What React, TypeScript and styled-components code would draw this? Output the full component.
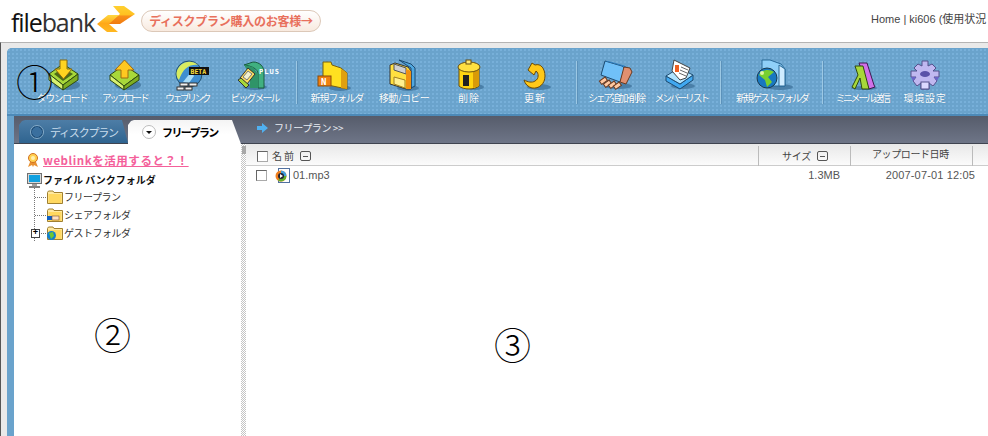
import React from "react";
import styled, { createGlobalStyle } from "styled-components";

const JP = `"Noto Sans CJK JP", "Liberation Sans", sans-serif`;

const Global = createGlobalStyle`
  html, body { margin: 0; padding: 0; background: #fff; }
  body { width: 988px; height: 436px; overflow: hidden; font-family: ${JP}; }
`;

/* ---------- toolbar icons ---------- */
const Shadow = ({ cx = 24, cy = 28, rx = 14, ry = 4 }: { cx?: number; cy?: number; rx?: number; ry?: number }) => (
  <ellipse cx={cx} cy={cy} rx={rx} ry={ry} fill="#4a7fa8" />
);

const DownloadIcon = () => (
  <Glyph viewBox="0 0 44 32">
    <Shadow cx={27} cy={25} rx={13} ry={5} />
    <polygon points="9,14 23,4 38,14 23,25" fill="#a8d83a" stroke="#2f4a10" />
    <polygon points="9,14 23,25 23,30 9,20" fill="#d8f070" stroke="#2f4a10" />
    <polygon points="38,14 23,25 23,30 38,20" fill="#7fae22" stroke="#2f4a10" />
    <polygon points="14,14 23,8 33,14 23,21" fill="#4c6a18" />
    <polygon points="20,0 27,0 27,9 32,9 23.5,19 15,9 20,9" fill="#ffd420" stroke="#8a6a10" />
  </Glyph>
);

const UploadIcon = () => (
  <Glyph viewBox="0 0 44 32">
    <Shadow cx={25} cy={25} rx={13} ry={5} />
    <polygon points="7,15 21,5 36,15 21,26" fill="#a8d83a" stroke="#2f4a10" />
    <polygon points="7,15 21,26 21,30 7,20" fill="#d8f070" stroke="#2f4a10" />
    <polygon points="36,15 21,26 21,30 36,20" fill="#7fae22" stroke="#2f4a10" />
    <polygon points="21.5,0 31,10 25,10 25,18 18,18 18,10 12,10" fill="#ffc820" stroke="#a06a10" />
  </Glyph>
);

const WeblinkIcon = () => (
  <Glyph viewBox="0 0 44 32">
    <circle cx={24} cy={14} r={13} fill="#3f8ed0" stroke="#24506c" />
    <path d="M11.5 13 C13 3 25 -2 33 5 C25 4 18 8 14 20 C12 18 11.5 16 11.5 13 Z" fill="#d8ec60" />
    <path d="M18 22 L26 12 L29 16 L24 23 Z" fill="#a8dcf8" />
    <g fill="#f0f0f0" stroke="#333" strokeWidth="1">
      <rect x={15} y={23} width={8} height={3} />
      <rect x={24} y={23} width={8} height={3} />
      <rect x={12} y={27} width={7} height={3} />
      <rect x={20} y={27} width={7} height={3} />
    </g>
    <rect x={24} y={7} width={20} height={8} fill="#111" />
    <IconText x={25.5} y={14} fill="#ffe040" size={6.5}>BETA</IconText>
  </Glyph>
);

const BigmailIcon = () => (
  <Glyph viewBox="0 0 44 32">
    <Shadow cx={22} cy={27} rx={12} ry={3} />
    <path d="M11 5 L20 2 C27 2 31 7 31 12 L31 28 L25 28 L25 14 C25 9 19 6 11 5 Z" fill="#40b080" stroke="#1a5a40" />
    <polygon points="11,5 20,7 25,14 25,28 17,28 17,15" fill="#2f9468" />
    <polygon points="7,18 15,8 22,14 14,24" fill="#ffe060" stroke="#333" />
    <polygon points="10,17 15,11 19,14 14,20" fill="#f0f0d0" stroke="#777" />
    <polygon points="5,20 8,18 16,25 13,28" fill="#a8d83a" stroke="#333" />
    <IconText x={26} y={14} fill="#fff" size={7} letterSpacing={1}>PLUS</IconText>
  </Glyph>
);

const NewFolderIcon = () => (
  <Glyph viewBox="0 0 44 32">
    <Shadow cx={25} cy={28} rx={11} ry={3} />
    <polygon points="8,2 16,2 17,5 26,8 32,13 32,29 8,24" fill="#ffe020" stroke="#7a6010" />
    <polygon points="26,9 32,13 32,29 26,28" fill="#e0a010" />
    <rect x={3} y={16} width={13} height={10} fill="#f08010" stroke="#8a4a08" />
    <IconText x={6} y={24.5} fill="#fff" size={9}>N</IconText>
  </Glyph>
);

const MoveIcon = () => (
  <Glyph viewBox="0 0 44 32">
    <Shadow cx={26} cy={28} rx={11} ry={3} />
    <polygon points="17,0 29,4 33,8 33,26 29,28 29,8" fill="#50a8e0" stroke="#1c4a70" />
    <polygon points="8,5 13,3 26,7 29,11 29,29 24,29 8,24" fill="#ffe040" stroke="#333" />
    <polygon points="12,4 24,8 24,14 12,10" fill="#d0d0d0" stroke="#555" />
    <polygon points="12,17 23,20 23,28 12,24" fill="#fff090" stroke="#a08020" />
    <polygon points="24,9 29,11 29,29 24,29" fill="#f09010" />
  </Glyph>
);

const DeleteIcon = () => (
  <Glyph viewBox="0 0 44 32">
    <Shadow cx={28} cy={27} rx={9} ry={3} />
    <path d="M12 8 L32 8 L32 26 C28 30 16 30 12 26 Z" fill="#ffd410" stroke="#6a5010" />
    <path d="M26 9 L32 8 L32 26 L26 28 Z" fill="#d89a08" />
    <ellipse cx={22} cy={7} rx={11} ry={5} fill="#ffe040" stroke="#6a5010" />
    <rect x={19} y={0} width={5} height={4} fill="#ffe870" stroke="#6a5010" />
    <rect x={16} y={15} width={6} height={11} fill="#222" />
  </Glyph>
);

const RefreshIcon = () => (
  <Glyph viewBox="0 0 44 32">
    <Shadow cx={26} cy={27} rx={12} ry={3} />
    <path d="M15 10 L19 3 L22 5 C28 3 32 9 32 16 C32 24 26 29 19 28 C15 27 12 24 11 20 C15 22 19 23 22 21 C26 19 26 13 23 11 L21 15 Z" fill="#ffc818" stroke="#6a4a08" />
  </Glyph>
);

const ShareIcon = () => (
  <Glyph viewBox="0 0 44 32">
    <Shadow cx={24} cy={26} rx={14} ry={3} />
    <polygon points="11,1 28,6 31,9 26,22 7,15" fill="#70c0f8" stroke="#1c4a70" />
    <polygon points="11,1 14,1 32,6 31,9 28,6" fill="#2f7fc0" />
    <polygon points="30,7 36,8 38,12 32,24 26,22" fill="#e09070" stroke="#6a3a20" />
    <g stroke="#6a3a20" fill="#ffc8a0">
      <rect x={6} y={19} width={7} height={4} transform="rotate(-35 9 21)" />
      <rect x={10} y={22} width={7} height={4} transform="rotate(-35 13 24)" />
      <rect x={15} y={23} width={7} height={4} transform="rotate(-35 18 25)" />
      <rect x={20} y={24} width={7} height={4} transform="rotate(-35 23 26)" />
    </g>
  </Glyph>
);

const MemberIcon = () => (
  <Glyph viewBox="0 0 44 32">
    <Shadow cx={24} cy={26} rx={12} ry={3} />
    <polygon points="7,16 21,24 34,15 34,20 21,29 7,21" fill="#40a8f0" stroke="#1c4a70" />
    <polygon points="7,16 20,8 34,15 21,24" fill="#b0e4ff" stroke="#1c4a70" />
    <polygon points="13,11 15,0 31,8 27,18 21,20" fill="#fff" stroke="#444" />
    <rect x={16} y={5} width={4} height={7} fill="#f06020" />
    <path d="M22 7 L29 10 M21 10 L28 13 M20 13 L27 16" stroke="#666" />
  </Glyph>
);

const GuestIcon = () => (
  <Glyph viewBox="0 0 44 32">
    <Shadow cx={30} cy={27} rx={13} ry={3} />
    <polygon points="12,0 20,0 31,4 35,9 35,26 22,26 12,16" fill="#90d0f8" stroke="#2a6a98" />
    <polygon points="29,5 35,9 35,26 29,26" fill="#d0ecff" stroke="#2a6a98" />
    <circle cx={17} cy={18} r={10} fill="#1878c0" stroke="#1a3a50" />
    <path d="M9 15 C12 9 20 9 24 12 L18 17 L22 22 L17 27 L15 20 Z" fill="#78d030" />
    <circle cx={12} cy={13} r={2} fill="#e0f8a0" />
  </Glyph>
);

const MiniMailIcon = () => (
  <Glyph viewBox="0 0 44 32">
    <Shadow cx={24} cy={28} rx={13} ry={2} />
    <polygon points="19,3 27,3 34,25 35,27 29,29 24,17" fill="#d070e8" stroke="#3c1a50" />
    <polygon points="15,6 23,6 29,29 22,29 20,18 15,29 12,27 18,15" fill="#a8d83a" stroke="#2f4a10" />
  </Glyph>
);

const SettingsIcon = () => (
  <Glyph viewBox="0 0 44 32">
    <polygon
      points="19,1 25,1 25,6 29,4 33,8 30,11 36,11 36,17 31,17 34,21 30,26 26,23 26,29 18,29 18,23 14,26 10,21 13,17 8,17 8,11 14,11 11,8 15,4 19,6"
      fill="#c0b8f0"
      stroke="#55508c"
    />
    <polygon points="8,17 13,17 10,21" fill="#6c64c8" />
    <polygon points="31,17 36,17 34,21" fill="#6c64c8" />
    <rect x={18} y={22} width={8} height={7} fill="#dcd8ff" stroke="#55508c" />
    <ellipse cx={22} cy={14} rx={5} ry={3} fill="#5a52a8" />
  </Glyph>
);

const LogoArrows = () => (
  <LogoMark viewBox="0 0 38 28">
    <defs>
      <linearGradient id="arrowUp" x1="0" y1="0" x2="0" y2="1">
        <stop offset="0" stopColor="#ffd030" />
        <stop offset="0.5" stopColor="#ffc020" />
        <stop offset="0.55" stopColor="#f8901a" />
        <stop offset="1" stopColor="#f07a10" />
      </linearGradient>
      <linearGradient id="arrowDown" x1="0" y1="0" x2="0" y2="1">
        <stop offset="0" stopColor="#ffd840" />
        <stop offset="0.5" stopColor="#ffa818" />
        <stop offset="1" stopColor="#ffb820" />
      </linearGradient>
    </defs>
    <polygon points="16,1 27,1 38,9 23,19 10,19 23,9" fill="url(#arrowUp)" />
    <polygon points="0,19 11,10 22,10 12,19 21,27 10,27" fill="url(#arrowDown)" />
  </LogoMark>
);

/* ---------- small tree / table icons ---------- */
const Medal = () => (
  <Tiny viewBox="0 0 12 14" $w={12} $h={14}>
    <polygon points="3,9 1,14 5,12 6,14 7,12 11,14 9,9" fill="#e89030" />
    <circle cx={6} cy={5} r={4.5} fill="#ffd050" stroke="#d07020" />
    <circle cx={6} cy={5} r={2} fill="#fff0b0" />
  </Tiny>
);
const Monitor = () => (
  <Tiny viewBox="0 0 15 15" $w={15} $h={15}>
    <rect x={0.5} y={0.5} width={14} height={10} fill="#d8d8d8" stroke="#707070" />
    <rect x={2} y={2} width={11} height={7} fill="#10a0e0" />
    <rect x={5} y={11} width={5} height={2} fill="#a0a0a0" />
    <rect x={2} y={13} width={11} height={2} fill="#808080" />
  </Tiny>
);
const Folder = ({ badge }: { badge?: "share" | "globe" }) => (
  <Tiny viewBox="0 0 16 14" $w={16} $h={14}>
    <path d="M0.5 2.5 L1.5 1 L6 1 L7 2.5 L15.5 2.5 L15.5 13.5 L0.5 13.5 Z" fill="#ffe9a0" stroke="#a08030" />
    <rect x={1.5} y={4} width={13} height={9} fill="#ffd860" />
    {badge === "share" && (
      <g>
        <rect x={0} y={8} width={6} height={4} fill="#1060c0" />
        <rect x={5} y={8} width={7} height={4} fill="#ffe0c0" stroke="#805030" strokeWidth={0.6} />
      </g>
    )}
    {badge === "globe" && (
      <g>
        <circle cx={4.5} cy={9.5} r={4.5} fill="#1080d0" />
        <path d="M2 7 L6 6 L7 10 L4 13 Z" fill="#70c830" />
      </g>
    )}
  </Tiny>
);
const AudioFile = () => (
  <Tiny viewBox="0 0 15 15" $w={15} $h={15}>
    <rect x={3.5} y={0.5} width={11} height={14} fill="#fff" stroke="#5070a0" />
    <circle cx={6} cy={8} r={5.5} fill="#f08020" />
    <path d="M6 2.5 A5.5 5.5 0 0 1 11.5 8 L6 8 Z" fill="#40a0e0" />
    <path d="M6 8 L11.5 8 A5.5 5.5 0 0 1 3 12.6 Z" fill="#60b030" />
    <circle cx={6} cy={8} r={3} fill="#223" />
    <polygon points="5,6 8,8 5,10" fill="#fff" />
  </Tiny>
);

/* ---------- data ---------- */
type Tool = { label: string; w: number; track: number; icon: React.ReactNode; sepAfter?: boolean };

const tools: Tool[] = [
  { label: "ダウンロード", w: 64, track: -1.6, icon: <DownloadIcon /> },
  { label: "アップロード", w: 61, track: -2.4, icon: <UploadIcon /> },
  { label: "ウェブリンク", w: 64, track: -2.7, icon: <WeblinkIcon /> },
  { label: "ビッグメール", w: 71, track: -2, icon: <BigmailIcon />, sepAfter: true },
  { label: "新規フォルダ", w: 66, track: -1.2, icon: <NewFolderIcon /> },
  { label: "移動/コピー", w: 68, track: -0.6, icon: <MoveIcon /> },
  { label: "削除", w: 62, track: 1, icon: <DeleteIcon /> },
  { label: "更新", w: 70, track: 1, icon: <RefreshIcon />, sepAfter: true },
  { label: "シェア追加･削除", w: 64, track: -2.4, icon: <ShareIcon /> },
  { label: "メンバーリスト", w: 66, track: -2.4, icon: <MemberIcon />, sepAfter: true },
  { label: "新規ゲストフォルダ", w: 88, track: -2, icon: <GuestIcon />, sepAfter: true },
  { label: "ミニメール送信", w: 64, track: -2.4, icon: <MiniMailIcon /> },
  { label: "環境設定", w: 62, track: 0.7, icon: <SettingsIcon /> },
];

const App = () => (
  <Page>
    <Global />
    <Header>
      <Brand>
        <Wordmark>
          <b>file</b>bank
        </Wordmark>
        <LogoArrows />
      </Brand>
      <BuyPill>ディスクプラン購入のお客様→</BuyPill>
      <UserNav>Home | ki606 (使用状況</UserNav>
    </Header>
    <Shell>
      <Frame>
        <Toolbar>
          {tools.map(t => (
            <React.Fragment key={t.label}>
              <ToolItem $w={t.w}>
                {t.icon}
                <ToolLabel $track={t.track}>{t.label}</ToolLabel>
              </ToolItem>
              {t.sepAfter && <ToolSep />}
            </React.Fragment>
          ))}
        </Toolbar>
        <Body>
          <TabBar>
            <Tab>
              <TabDot />
              ディスクプラン
            </Tab>
            <ActiveTab>
              <ActiveDot />
              フリープラン
            </ActiveTab>
            <Crumb>
              <CrumbArrow viewBox="0 0 12 10">
                <polygon points="0,3 5,3 5,0 11,5 5,10 5,7 0,7" fill="#50b0f0" />
              </CrumbArrow>
              フリープラン &gt;&gt;
            </Crumb>
          </TabBar>
          <Panels>
            <Sidebar>
              <Promo>
                <Medal />
                <PromoLink>weblinkを活用すると？！</PromoLink>
              </Promo>
              <TreeRoot>
                <Monitor />
                ファイル バンクフォルダ
              </TreeRoot>
              <TreeList>
                <TreeRow>
                  <Folder />
                  フリープラン
                </TreeRow>
                <TreeRow>
                  <Folder badge="share" />
                  シェアフォルダ
                </TreeRow>
                <TreeRow>
                  <Expander>+</Expander>
                  <Folder badge="globe" />
                  ゲストフォルダ
                </TreeRow>
              </TreeList>
            </Sidebar>
            <Splitter />
            <Main>
              <TableHead>
                <NameHead>
                  <Check />
                  名前
                  <SortBox />
                </NameHead>
                <SizeHead>
                  サイズ
                  <SortBox />
                </SizeHead>
                <DateHead>アップロード日時</DateHead>
              </TableHead>
              <FileRow>
                <FileName>
                  <Check />
                  <AudioFile />
                  01.mp3
                </FileName>
                <FileSize>1.3MB</FileSize>
                <FileDate>2007-07-01 12:05</FileDate>
              </FileRow>
            </Main>
          </Panels>
        </Body>
      </Frame>
    </Shell>
    <Marker $x={16} $y={59}>①</Marker>
    <Marker $x={94} $y={312}>②</Marker>
    <Marker $x={494} $y={322}>③</Marker>
  </Page>
);

export default App;

/* ---------- styles ---------- */
const Page = styled.div`
  position: relative;
  width: 988px;
  height: 436px;
  overflow: hidden;
  background: #fff;
`;

const Header = styled.header`
  height: 42px;
  display: flex;
  align-items: center;
  padding-left: 11px;
  box-sizing: border-box;
`;
const Brand = styled.div`
  display: flex;
  align-items: center;
  width: 130px;
`;
const Wordmark = styled.div`
  font: 400 25px/30px "Open Sans", sans-serif;
  letter-spacing: -1.1px;
  color: #333;
  width: 86px;
  flex: none;
  margin-top: 1px;
  b {
    font-weight: 500;
    color: #111;
  }
`;
const LogoMark = styled.svg`
  flex: none;
  width: 38px;
  height: 28px;
  margin-top: -4px;
`;
const BuyPill = styled.div`
  box-sizing: border-box;
  width: 180px;
  height: 22px;
  border: 1px solid #dcc8b8;
  border-radius: 11px;
  background: linear-gradient(#fff, #f8eadf);
  color: #e8705c;
  font: 700 12px/20px ${JP};
  letter-spacing: -0.25px;
  text-align: center;
  white-space: nowrap;
`;
const UserNav = styled.div`
  margin-left: auto;
  width: 117px;
  color: #444;
  font: 400 11px/14px "Liberation Sans", ${JP};
  white-space: nowrap;
  overflow: hidden;
  margin-top: -5px;
`;

const Shell = styled.div`
  height: 394px;
  box-sizing: border-box;
  border-top: 1px solid #b4b4b4;
  border-left: 1px solid #555;
  background: #e9e9e9;
  padding: 5px 0 0 6px;
`;
const Frame = styled.div`
  height: 100%;
  border-radius: 5px 0 0 0;
  background-color: #6aa3cc;
  overflow: hidden;
`;
const Toolbar = styled.div`
  height: 68px;
  box-sizing: border-box;
  display: flex;
  align-items: flex-start;
  padding: 12px 0 0 23px;
  border-bottom: 2px solid #4d8ab8;
  background-color: #6aa3cc;
  background-image: radial-gradient(#78b0da 0.7px, transparent 0.9px);
  background-size: 4px 4px;
`;
const ToolItem = styled.div<{ $w: number }>`
  width: ${p => p.$w}px;
  flex: none;
  display: flex;
  flex-direction: column;
  align-items: center;
`;
const Glyph = styled.svg`
  display: block;
  width: 44px;
  height: 32px;
  overflow: visible;
`;
const IconText = styled.text<{ size?: number }>`
  font: 700 ${p => p.size ?? 7}px "DejaVu Sans Mono", monospace;
`;
const ToolLabel = styled.div<{ $track: number }>`
  margin-top: -1px;
  color: #fff;
  font: 400 10px/14px ${JP};
  letter-spacing: ${p => p.$track}px;
  white-space: nowrap;
  text-shadow: 0 0 1px #3f7aa6;
`;
const ToolSep = styled.div`
  flex: none;
  width: 1px;
  height: 43px;
  margin: 1px 6px 0 6px;
  background: #9cc8e4;
  border-right: 1px solid #5c92bb;
`;

const Body = styled.div`
  margin-left: 7px;
  height: calc(100% - 68px);
  display: flex;
  flex-direction: column;
`;
const TabBar = styled.div`
  height: 28px;
  flex: none;
  display: flex;
  align-items: flex-end;
  padding-left: 5px;
  background: linear-gradient(#565c6b, #6e7587);
  border-bottom: 1px solid #3f4450;
  box-sizing: border-box;
`;
const Tab = styled.div`
  box-sizing: border-box;
  width: 109px;
  height: 23px;
  flex: none;
  display: flex;
  align-items: center;
  gap: 6px;
  padding-left: 11px;
  clip-path: polygon(0 100%, 0 5px, 3px 1px, 6px 0, calc(100% - 6px) 0, 100% 100%);
  background: linear-gradient(#4d7da6, #2f6490);
  color: #c8dcec;
  font: 400 11px/16px ${JP};
  letter-spacing: -1.2px;
  white-space: nowrap;
`;
const TabDot = styled.span`
  width: 14px;
  height: 14px;
  flex: none;
  border-radius: 50%;
  background: radial-gradient(#3a6f9e 55%, #1f4f7a 60%);
  border: 1px solid #86acc8;
  box-sizing: border-box;
`;
const ActiveTab = styled.div`
  box-sizing: border-box;
  width: 113px;
  height: 24px;
  flex: none;
  display: flex;
  align-items: center;
  gap: 6px;
  padding-left: 14px;
  clip-path: polygon(0 100%, 0 5px, 3px 1px, 6px 0, calc(100% - 9px) 0, 100% 100%);
  background: linear-gradient(#f4f4f4, #fff 60%);
  color: #000;
  font: 700 11px/16px ${JP};
  letter-spacing: -1.6px;
  margin-bottom: -1px;
  white-space: nowrap;
`;
const ActiveDot = styled.span`
  position: relative;
  width: 14px;
  height: 14px;
  flex: none;
  border-radius: 50%;
  border: 1px solid #bbb;
  box-sizing: border-box;
  background: #fff;
  &::after {
    content: "";
    position: absolute;
    left: 3px;
    top: 5px;
    border: 3px solid transparent;
    border-top-color: #111;
    border-bottom: 0;
  }
`;
const Crumb = styled.div`
  display: flex;
  align-items: center;
  gap: 5px;
  margin: 0 0 3px 16px;
  height: 24px;
  color: #e8ecf2;
  font: 400 10px/14px ${JP};
  letter-spacing: -0.4px;
  white-space: nowrap;
`;
const CrumbArrow = styled.svg`
  width: 12px;
  height: 10px;
  flex: none;
`;

const Panels = styled.div`
  flex: 1;
  display: flex;
  min-height: 0;
`;
const Sidebar = styled.aside`
  width: 227px;
  flex: none;
  box-sizing: border-box;
  background: #fff;
  padding: 8px 0 0 13px;
`;
const Tiny = styled.svg<{ $w: number; $h: number }>`
  flex: none;
  width: ${p => p.$w}px;
  height: ${p => p.$h}px;
`;
const Promo = styled.div`
  display: flex;
  align-items: center;
  gap: 4px;
  height: 16px;
`;
const PromoLink = styled.span`
  color: #f4609a;
  font: 700 11.5px/16px ${JP};
  letter-spacing: 0.55px;
  text-decoration: underline;
  white-space: nowrap;
`;
const TreeRoot = styled.div`
  display: flex;
  align-items: center;
  gap: 1px;
  height: 16px;
  margin-top: 4px;
  color: #111;
  font: 700 10px/16px ${JP};
  letter-spacing: 0;
  white-space: nowrap;
`;
const TreeList = styled.div`
  margin: 0 0 0 7px;
  height: 53px;
  border-left: 1px dotted #777;
`;
const TreeRow = styled.div`
  position: relative;
  display: flex;
  align-items: center;
  gap: 1px;
  height: 18px;
  color: #333;
  font: 400 10px/14px ${JP};
  letter-spacing: -0.5px;
  white-space: nowrap;
  &::before {
    content: "";
    width: 11px;
    border-top: 1px dotted #777;
    flex: none;
  }
`;
const Expander = styled.span`
  position: absolute;
  left: -4px;
  top: 5px;
  width: 9px;
  height: 9px;
  box-sizing: border-box;
  border: 1px solid #444;
  background: #fff;
  color: #000;
  font: 700 9px/7px "Liberation Mono", monospace;
  text-align: center;
  letter-spacing: 0;
`;
const Splitter = styled.div`
  position: relative;
  width: 5px;
  flex: none;
  background-color: #fff;
  background-image: repeating-conic-gradient(#c4c4c4 0 25%, #fff 0 50%);
  background-size: 2px 2px;
  &::before {
    content: "";
    position: absolute;
    left: 1px;
    top: 2px;
    width: 4px;
    height: 8px;
    background: #a8a8a8;
  }
`;
const Main = styled.main`
  flex: 1;
  background: #fff;
`;
const TableHead = styled.div`
  height: 22px;
  box-sizing: border-box;
  display: grid;
  grid-template-columns: 513px 92px 122px 1fr;
  border-bottom: 1px solid #ccc;
  background: linear-gradient(#e8e8e8, #fbfbfb);
  color: #444;
  font: 400 10px/20px ${JP};
`;
const NameHead = styled.div`
  display: flex;
  align-items: center;
  gap: 4px;
  padding-left: 11px;
  letter-spacing: 2px;
  border-right: 1px solid #bbb;
  margin: 2px 0 4px;
`;
const SizeHead = styled.div`
  display: flex;
  align-items: center;
  gap: 6px;
  padding-left: 23px;
  letter-spacing: -0.2px;
  border-right: 1px solid #bbb;
  margin: 2px 0 4px;
`;
const DateHead = styled.div`
  padding-left: 21px;
  letter-spacing: -0.4px;
  line-height: 15px;
  border-right: 1px solid #bbb;
  margin: 2px 0 4px;
  white-space: nowrap;
`;
const SortBox = styled.span`
  width: 11px;
  height: 10px;
  box-sizing: border-box;
  border: 1px solid #555;
  border-radius: 2px;
  background: linear-gradient(#555, #555) center / 5px 1px no-repeat;
`;
const Check = styled.span`
  flex: none;
  width: 11px;
  height: 11px;
  box-sizing: border-box;
  background: #fff;
  border: 1px solid #666;
  border-right-color: #aaa;
  border-bottom-color: #aaa;
`;
const FileRow = styled.div`
  display: grid;
  grid-template-columns: 512px 82px 135px;
  height: 18px;
  align-items: center;
  color: #555;
  font: 400 11px/14px "Liberation Sans", sans-serif;
`;
const FileName = styled.div`
  display: flex;
  align-items: center;
  padding-left: 10px;
  gap: 3px;
  svg {
    margin-left: 5px;
  }
`;
const FileSize = styled.div`
  text-align: right;
`;
const FileDate = styled.div`
  text-align: right;
  letter-spacing: 0.15px;
  white-space: nowrap;
`;
const Marker = styled.div<{ $x: number; $y: number }>`
  position: absolute;
  left: ${p => p.$x}px;
  top: ${p => p.$y}px;
  color: #000;
  font: 300 37px/44px "Noto Sans CJK JP", sans-serif;
`;
